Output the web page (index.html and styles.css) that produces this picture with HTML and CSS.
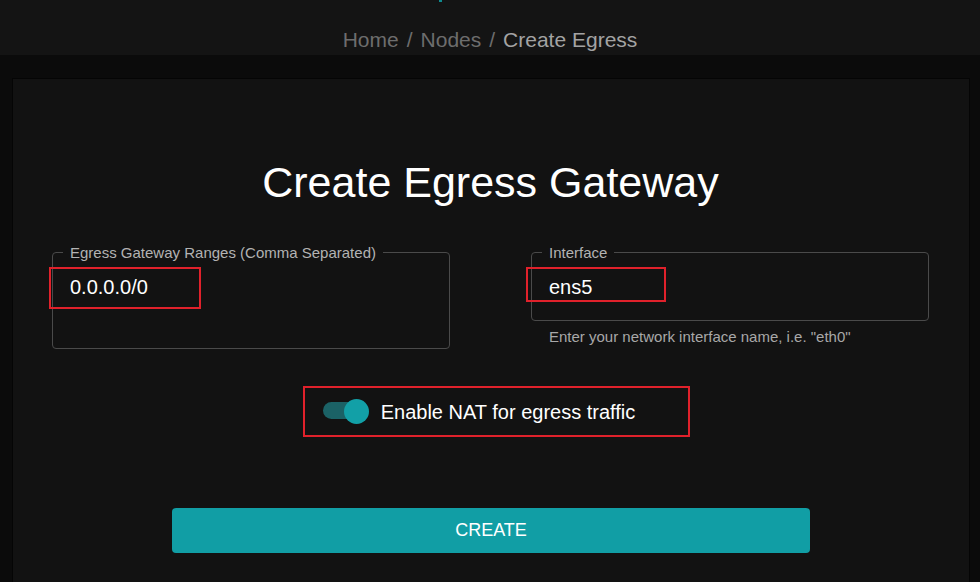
FILE: index.html
```html
<!DOCTYPE html>
<html lang="en">
<head>
<meta charset="utf-8">
<title>Create Egress</title>
<link rel="stylesheet" href="styles.css">
</head>
<body>
<header class="topbar">
  <div class="logo-tip"></div>
  <nav class="crumbs">
    <span class="crumb">Home</span>
    <span class="sep">/</span>
    <span class="crumb">Nodes</span>
    <span class="sep">/</span>
    <span class="crumb current">Create Egress</span>
  </nav>
</header>
<main class="card">
  <h1 class="title">Create Egress Gateway</h1>
  <div class="fields">
    <div class="field-col">
      <fieldset class="field field-multi">
        <legend class="label">Egress Gateway Ranges (Comma Separated)</legend>
        <div class="value">0.0.0.0/0</div>
        <span class="mark mark-ranges"></span>
      </fieldset>
    </div>
    <div class="field-col">
      <fieldset class="field field-single">
        <legend class="label">Interface</legend>
        <div class="value">ens5</div>
        <span class="mark mark-iface"></span>
      </fieldset>
      <p class="helper">Enter your network interface name, i.e. "eth0"</p>
    </div>
  </div>
  <div class="toggle-row">
    <label class="toggle">
      <span class="switch"><span class="track"></span><span class="thumb"></span></span>
      <span class="toggle-text">Enable NAT for egress traffic</span>
    </label>
  </div>
  <div class="actions">
    <button class="btn" type="button">CREATE</button>
  </div>
</main>
</body>
</html>
```
FILE: styles.css
```css
* { box-sizing: border-box; }
html, body { margin: 0; padding: 0; }
body {
  background: #0b0b0b;
  font-family: "Liberation Sans", Arial, sans-serif;
  color: #fff;
  height: 582px;
  overflow: hidden;
}
.topbar {
  background: #141414;
  height: 55px;
}
.logo-tip {
  width: 3px;
  height: 2px;
  margin-left: 439px;
  background: #0f8a8f;
}
.crumbs {
  display: flex;
  justify-content: center;
  font-size: 21px;
  line-height: 24px;
  padding-top: 26px;
  color: #6d6d6d;
}
.sep { margin: 0 8px; }
.crumb.current { color: #a3a3a3; }

.card {
  margin: 23px 10px 0 12px;
  background: #121212;
  border: 1px solid #050505;
  padding: 79px 40px 60px 39px;
  height: 520px;
}
.title {
  margin: 0;
  text-align: center;
  font-weight: 400;
  font-size: 43px;
  line-height: 48px;
}
.fields {
  display: flex;
  justify-content: space-between;
  margin-top: 38px;
}
.field-col { width: 398px; }
.field {
  position: relative;
  margin: 0;
  border: 1px solid #4a4a4a;
  border-radius: 4px;
  padding: 0;
  min-width: 0;
}
.label {
  margin-left: 10px;
  padding: 0 7px;
  font-size: 15px;
  line-height: 17px;
  color: #b3b3b3;
}
.value {
  font-size: 20px;
  line-height: 23px;
  padding: 15px 17px 0;
}
.field-multi .value { padding-bottom: 49px; }
.field-single .value { padding-bottom: 21px; }
.mark {
  position: absolute;
  border: 2px solid #e0212b;
}
.mark-ranges { left: -4px; top: 6px; width: 152px; height: 42px; }
.mark-iface { left: -6px; top: 6px; width: 140px; height: 35px; }
.helper {
  margin: 7px 0 0 18px;
  font-size: 15px;
  line-height: 17px;
  color: #a8a8a8;
}
.toggle-row {
  display: flex;
  justify-content: center;
  margin-top: 37px;
  padding-left: 12px;
}
.toggle {
  display: flex;
  align-items: center;
  gap: 12px;
  border: 2px solid #e0212b;
  height: 51px;
  padding: 0 53px 2px 18px;
}
.switch {
  position: relative;
  width: 46px;
  height: 26px;
  display: flex;
  align-items: center;
}
.track {
  width: 38px;
  height: 17px;
  border-radius: 9px;
  background: #1b6266;
}
.thumb {
  position: absolute;
  right: 0;
  top: 1px;
  width: 25px;
  height: 25px;
  border-radius: 50%;
  background: #12a0a7;
}
.toggle-text {
  font-size: 20px;
  line-height: 23px;
  padding-top: 3px;
}
.actions {
  display: flex;
  justify-content: center;
  margin-top: 71px;
  padding-left: 1px;
}
.btn {
  width: 638px;
  height: 45px;
  border: none;
  border-radius: 4px;
  background: #119ea5;
  color: #fff;
  font-family: "Liberation Sans", Arial, sans-serif;
  font-size: 18px;
}
```
